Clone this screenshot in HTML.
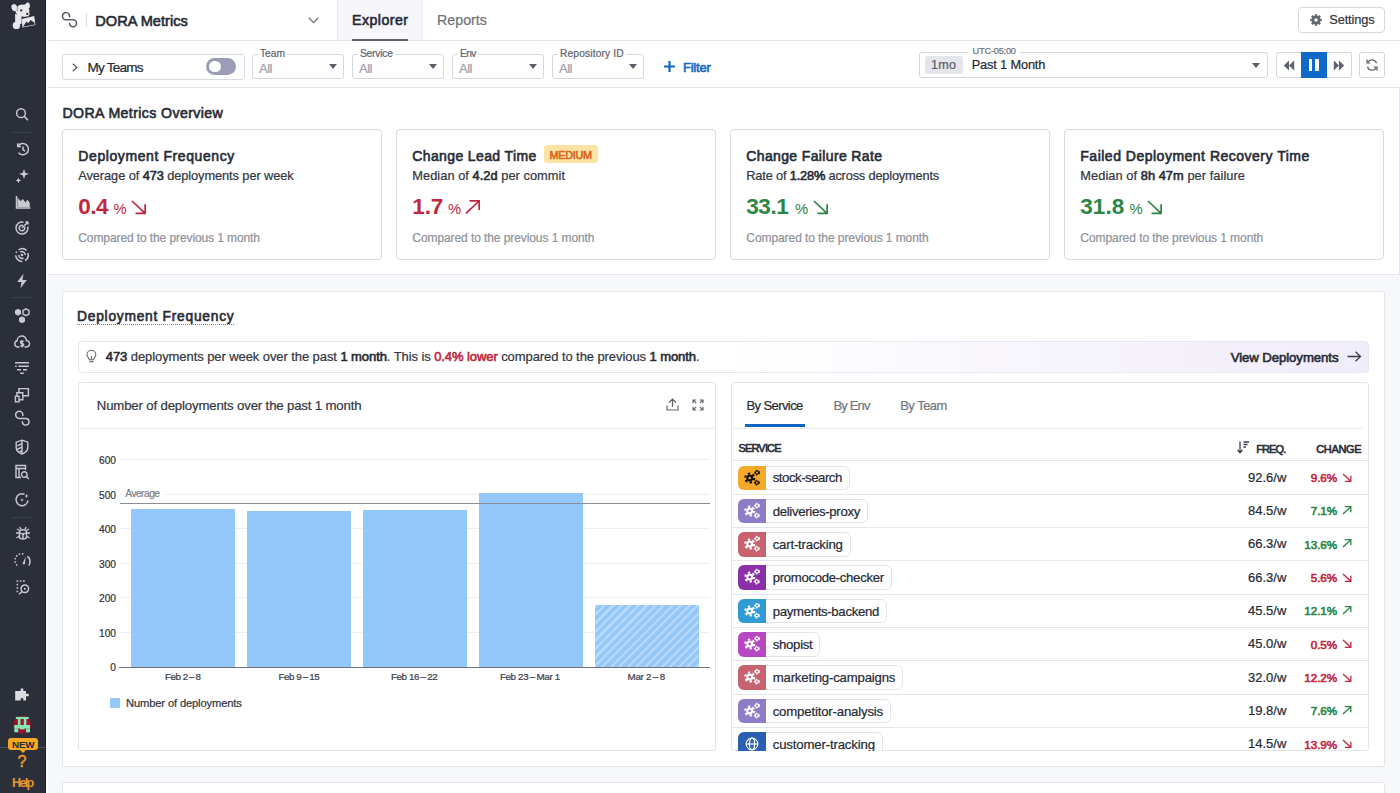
<!DOCTYPE html>
<html><head><meta charset="utf-8"><style>
*{box-sizing:border-box;margin:0;padding:0}
html,body{width:1400px;height:793px;overflow:hidden;background:#f7f8fa;font-family:"Liberation Sans",sans-serif;color:#2c303a;position:relative}
.a{position:absolute}
.t{position:absolute;white-space:nowrap;line-height:1}
svg.a{overflow:visible}
.n{-webkit-text-stroke:0.22px currentColor}
.sb{-webkit-text-stroke:0.6px currentColor}

</style></head><body>
<div class="a" style="left:0.00px;top:0.00px;width:46.00px;height:793.00px;background:#2b2f3a"></div>
<div class="a" style="left:45.00px;top:0.00px;width:1.00px;height:793.00px;background:#1d2029"></div>
<div class="a" style="left:46.00px;top:0.00px;width:1354.00px;height:40.00px;background:#fff"></div>
<div class="a" style="left:46.00px;top:40.00px;width:1354.00px;height:1.00px;background:#e3e4ea"></div>
<div class="a" style="left:46.00px;top:41.00px;width:1354.00px;height:46.00px;background:#fff"></div>
<div class="a" style="left:46.00px;top:87.00px;width:1354.00px;height:1.00px;background:#e3e4ea"></div>
<div class="a" style="left:46.00px;top:88.00px;width:1354.00px;height:187.00px;background:#fff"></div>
<div class="a" style="left:46.00px;top:274.00px;width:1354.00px;height:1.00px;background:#e6e7ec"></div>
<div class="a" style="left:1399.00px;top:88.00px;width:1.00px;height:187.00px;background:#e6e7ec"></div>
<div class="a" style="left:46.00px;top:0.00px;width:2.00px;height:793.00px;background:#fdfdfe"></div>
<svg class="a" style="left:60.00px;top:10.00px;" width="18" height="18" viewBox="0 0 18 18"><path d="M9.6 6.8A3.6 3.6 0 1 0 6 9.8H13A3.5 3.5 0 1 1 9.5 13.3" fill="none" stroke="#585c66" stroke-width="1.5" stroke-linecap="round"/></svg>
<div class="a" style="left:85.50px;top:13.00px;width:1.00px;height:14.00px;background:#dcdde3"></div>
<div class="t sb" style="left:95.30px;top:13.94px;font-size:14.60px;font-weight:normal;color:#272b35;">DORA Metrics</div>
<svg class="a" style="left:308.00px;top:17.00px;" width="11" height="7" viewBox="0 0 11 7"><path d="M0.8 0.8L5.5 5.6L10.2 0.8" fill="none" stroke="#6b6f7a" stroke-width="1.3"/></svg>
<div class="a" style="left:337.00px;top:0.00px;width:85.00px;height:40.00px;background:#f6f6fb"></div>
<div class="a" style="left:337.00px;top:0.00px;width:1.00px;height:40.00px;background:#e8e9ee"></div>
<div class="a" style="left:422.00px;top:0.00px;width:1.00px;height:40.00px;background:#eeeff3"></div>
<div class="t sb" style="left:352.00px;top:13.28px;font-size:14.20px;font-weight:normal;color:#272b35;letter-spacing:0.446px;">Explorer</div>
<div class="a" style="left:352.00px;top:39.00px;width:56.00px;height:2.00px;background:#5d6270"></div>
<div class="t n" style="left:437.00px;top:13.28px;font-size:14.20px;font-weight:normal;color:#6e727c;letter-spacing:0.046px;">Reports</div>
<div class="a" style="left:1298.00px;top:7.00px;width:87.00px;height:26.00px;border:1px solid #d6d8e0;border-radius:4px;background:#fff"></div>
<svg class="a" style="left:1310.00px;top:14.00px;" width="12" height="12" viewBox="0 0 12 12"><g fill="#62666f"><circle cx="6" cy="6" r="4.2"/><g stroke="#62666f" stroke-width="2.4"><path d="M6 0.3V11.7M0.3 6H11.7M1.9 1.9L10.1 10.1M10.1 1.9L1.9 10.1"/></g><circle cx="6" cy="6" r="1.7" fill="#fff"/></g></svg>
<div class="t n" style="left:1329.30px;top:14.36px;font-size:12.80px;font-weight:normal;color:#33373f;letter-spacing:-0.136px;">Settings</div>
<div class="a" style="left:61.50px;top:54.00px;width:183.00px;height:25.50px;border:1px solid #d9dbe3;border-radius:3px;background:#fff"></div>
<svg class="a" style="left:72.00px;top:63.00px;" width="6" height="9" viewBox="0 0 6 9"><path d="M0.8 0.8L4.8 4.5L0.8 8.2" fill="none" stroke="#555a66" stroke-width="1.2"/></svg>
<div class="t n" style="left:87.40px;top:60.89px;font-size:13.60px;font-weight:normal;color:#272b35;letter-spacing:-0.803px;">My Teams</div>
<div class="a" style="left:206.30px;top:58.30px;width:30.00px;height:16.70px;background:#9b9db7;border-radius:9px"></div>
<div class="a" style="left:209px;top:60.8px;width:11.7px;height:11.7px;border-radius:50%;background:#fff"></div>
<div class="a" style="left:252.00px;top:54.20px;width:92.00px;height:24.60px;border:1px solid #d6d8e0;border-radius:3px;background:#fff"></div>
<div class="a" style="left:258.00px;top:50.00px;width:29.00px;height:6.00px;background:#fff"></div>
<div class="t n" style="left:260.00px;top:48.97px;font-size:10.20px;font-weight:normal;color:#5f636d;letter-spacing:0.019px;">Team</div>
<div class="t n" style="left:259.00px;top:62.00px;font-size:13.00px;font-weight:normal;color:#9da0a8;letter-spacing:-0.474px;">All</div>
<div class="a" style="left:328.8px;top:64.3px;width:0;height:0;border-left:4.7px solid transparent;border-right:4.7px solid transparent;border-top:5.3px solid #5b5f6b"></div>
<div class="a" style="left:352.00px;top:54.20px;width:92.00px;height:24.60px;border:1px solid #d6d8e0;border-radius:3px;background:#fff"></div>
<div class="a" style="left:358.00px;top:50.00px;width:36.90px;height:6.00px;background:#fff"></div>
<div class="t n" style="left:360.00px;top:48.97px;font-size:10.20px;font-weight:normal;color:#5f636d;letter-spacing:-0.185px;">Service</div>
<div class="t n" style="left:359.00px;top:62.00px;font-size:13.00px;font-weight:normal;color:#9da0a8;letter-spacing:-0.474px;">All</div>
<div class="a" style="left:428.8px;top:64.3px;width:0;height:0;border-left:4.7px solid transparent;border-right:4.7px solid transparent;border-top:5.3px solid #5b5f6b"></div>
<div class="a" style="left:452.00px;top:54.20px;width:92.00px;height:24.60px;border:1px solid #d6d8e0;border-radius:3px;background:#fff"></div>
<div class="a" style="left:458.00px;top:50.00px;width:20.30px;height:6.00px;background:#fff"></div>
<div class="t n" style="left:460.00px;top:48.97px;font-size:10.20px;font-weight:normal;color:#5f636d;letter-spacing:-0.638px;">Env</div>
<div class="t n" style="left:459.00px;top:62.00px;font-size:13.00px;font-weight:normal;color:#9da0a8;letter-spacing:-0.474px;">All</div>
<div class="a" style="left:528.8px;top:64.3px;width:0;height:0;border-left:4.7px solid transparent;border-right:4.7px solid transparent;border-top:5.3px solid #5b5f6b"></div>
<div class="a" style="left:552.00px;top:54.20px;width:92.00px;height:24.60px;border:1px solid #d6d8e0;border-radius:3px;background:#fff"></div>
<div class="a" style="left:558.00px;top:50.00px;width:67.70px;height:6.00px;background:#fff"></div>
<div class="t n" style="left:560.00px;top:48.97px;font-size:10.20px;font-weight:normal;color:#5f636d;letter-spacing:0.159px;">Repository ID</div>
<div class="t n" style="left:559.00px;top:62.00px;font-size:13.00px;font-weight:normal;color:#9da0a8;letter-spacing:-0.474px;">All</div>
<div class="a" style="left:628.8px;top:64.3px;width:0;height:0;border-left:4.7px solid transparent;border-right:4.7px solid transparent;border-top:5.3px solid #5b5f6b"></div>
<svg class="a" style="left:663.00px;top:60.00px;" width="13" height="13" viewBox="0 0 13 13"><path d="M6.5 1V12M1 6.5H12" stroke="#1568c4" stroke-width="2.2"/></svg>
<div class="t sb" style="left:682.90px;top:61.00px;font-size:13.00px;font-weight:normal;color:#1568c4;letter-spacing:-0.178px;">Filter</div>
<div class="a" style="left:919.30px;top:52.00px;width:349.00px;height:25.80px;border:1px solid #d3d5de;border-radius:3px;background:#fff"></div>
<div class="a" style="left:968.00px;top:46.00px;width:52.00px;height:8.00px;background:#fff"></div>
<div class="t n" style="left:972.60px;top:47.11px;font-size:9.20px;font-weight:normal;color:#6c707a;letter-spacing:-0.199px;">UTC-05:00</div>
<div class="a" style="left:924.70px;top:55.70px;width:38.00px;height:18.20px;background:#e4e6ec;border-radius:3px"></div>
<div class="t n" style="left:931.00px;top:59.23px;font-size:12.60px;font-weight:normal;color:#5a5e69;letter-spacing:0.244px;">1mo</div>
<div class="t n" style="left:971.70px;top:59.06px;font-size:12.80px;font-weight:normal;color:#272b35;letter-spacing:-0.156px;">Past 1 Month</div>
<div class="a" style="left:1252px;top:62.9px;width:0;height:0;border-left:4.6px solid transparent;border-right:4.6px solid transparent;border-top:5px solid #5b5f6b"></div>
<div class="a" style="left:1276.00px;top:52.00px;width:75.50px;height:25.70px;border:1px solid #d3d5de;border-radius:3px;background:#fff"></div>
<div class="a" style="left:1301.00px;top:52.00px;width:25.70px;height:25.70px;background:#0f69c9"></div>
<svg class="a" style="left:1283.00px;top:60.00px;" width="12" height="11" viewBox="0 0 12 11"><path d="M6 0.5L0.8 5.5L6 10.5ZM11.2 0.5L6 5.5L11.2 10.5Z" fill="#5f636d"/></svg>
<svg class="a" style="left:1333.00px;top:60.00px;" width="12" height="11" viewBox="0 0 12 11"><path d="M0.8 0.5L6 5.5L0.8 10.5ZM6 0.5L11.2 5.5L6 10.5Z" fill="#5f636d"/></svg>
<div class="a" style="left:1308.50px;top:58.50px;width:3.60px;height:12.50px;background:#fff;border-radius:0.5px"></div>
<div class="a" style="left:1315.00px;top:58.50px;width:3.60px;height:12.50px;background:#fff;border-radius:0.5px"></div>
<div class="a" style="left:1359.30px;top:52.00px;width:25.40px;height:25.70px;border:1px solid #d3d5de;border-radius:3px;background:#fff"></div>
<svg class="a" style="left:1365.00px;top:58.00px;" width="14" height="14" viewBox="0 0 14 14"><path d="M11.6 5.2A5 5 0 0 0 2.6 4.2M2.4 8.8A5 5 0 0 0 11.4 9.8" fill="none" stroke="#62666f" stroke-width="1.3"/><path d="M2 1.6V4.8H5.2M12 12.4V9.2H8.8" fill="none" stroke="#62666f" stroke-width="1.3"/></svg>
<div class="t sb" style="left:62.40px;top:105.98px;font-size:14.20px;font-weight:normal;color:#272b35;letter-spacing:0.372px;">DORA Metrics Overview</div>
<div class="a" style="left:62.00px;top:129.00px;width:320.00px;height:131.00px;border:1px solid #d8d9e1;border-radius:4px;background:#fff"></div>
<div class="t sb" style="left:78.30px;top:148.85px;font-size:14.00px;font-weight:normal;color:#272b35;letter-spacing:0.593px;">Deployment Frequency</div>
<div class="t" style="left:78.30px;top:170.36px;font-size:12.80px;letter-spacing:-0.081px;"><span class="n" style="color:#33373f">Average of </span><span class="sb" style="color:#272b35">473</span><span class="n" style="color:#33373f"> deployments per week</span></div>
<div class="t" style="left:78.30px;top:196.25px;font-size:22.50px;font-weight:bold;color:#c1273e;letter-spacing:-0.489px;">0.4</div>
<div class="t" style="left:113.60px;top:202.27px;font-size:14.80px;font-weight:normal;color:#c1273e;">%</div>
<svg class="a" style="left:131.00px;top:200.00px;" width="15" height="14.3" viewBox="0 0 15 14.3"><path d="M1 1L13.5 12.8 M14.15 4.29V13.45H4.5" fill="none" stroke="#c1273e" stroke-width="1.7"/></svg>
<div class="t n" style="left:78.30px;top:231.64px;font-size:12.00px;font-weight:normal;color:#8f929b;letter-spacing:-0.099px;">Compared to the previous 1 month</div>
<div class="a" style="left:396.00px;top:129.00px;width:320.00px;height:131.00px;border:1px solid #d8d9e1;border-radius:4px;background:#fff"></div>
<div class="t sb" style="left:412.30px;top:148.85px;font-size:14.00px;font-weight:normal;color:#272b35;letter-spacing:0.376px;">Change Lead Time</div>
<div class="t" style="left:412.30px;top:170.36px;font-size:12.80px;letter-spacing:0.048px;"><span class="n" style="color:#33373f">Median of </span><span class="sb" style="color:#272b35">4.2d</span><span class="n" style="color:#33373f"> per commit</span></div>
<div class="t" style="left:412.30px;top:196.25px;font-size:22.50px;font-weight:bold;color:#c1273e;letter-spacing:-0.164px;">1.7</div>
<div class="t" style="left:448.00px;top:202.27px;font-size:14.80px;font-weight:normal;color:#c1273e;">%</div>
<svg class="a" style="left:465.00px;top:200.30px;" width="15" height="14.3" viewBox="0 0 15 14.3"><path d="M1 13.3L13.5 1.5 M4.5 0.85H14.15V10.01" fill="none" stroke="#c1273e" stroke-width="1.7"/></svg>
<div class="t n" style="left:412.30px;top:231.64px;font-size:12.00px;font-weight:normal;color:#8f929b;letter-spacing:-0.083px;">Compared to the previous 1 month</div>
<div class="a" style="left:730.00px;top:129.00px;width:320.00px;height:131.00px;border:1px solid #d8d9e1;border-radius:4px;background:#fff"></div>
<div class="t sb" style="left:746.30px;top:148.85px;font-size:14.00px;font-weight:normal;color:#272b35;letter-spacing:0.362px;">Change Failure Rate</div>
<div class="t" style="left:746.30px;top:170.36px;font-size:12.80px;letter-spacing:-0.179px;"><span class="n" style="color:#33373f">Rate of </span><span class="sb" style="color:#272b35">1.28%</span><span class="n" style="color:#33373f"> across deployments</span></div>
<div class="t" style="left:746.30px;top:196.25px;font-size:22.50px;font-weight:bold;color:#2b8646;letter-spacing:-0.447px;">33.1</div>
<div class="t" style="left:795.00px;top:202.27px;font-size:14.80px;font-weight:normal;color:#2b8646;">%</div>
<svg class="a" style="left:813.00px;top:200.00px;" width="15" height="14.3" viewBox="0 0 15 14.3"><path d="M1 1L13.5 12.8 M14.15 4.29V13.45H4.5" fill="none" stroke="#2b8646" stroke-width="1.7"/></svg>
<div class="t n" style="left:746.30px;top:231.64px;font-size:12.00px;font-weight:normal;color:#8f929b;letter-spacing:-0.075px;">Compared to the previous 1 month</div>
<div class="a" style="left:1064.00px;top:129.00px;width:320.00px;height:131.00px;border:1px solid #d8d9e1;border-radius:4px;background:#fff"></div>
<div class="t sb" style="left:1080.30px;top:148.85px;font-size:14.00px;font-weight:normal;color:#272b35;letter-spacing:0.499px;">Failed Deployment Recovery Time</div>
<div class="t" style="left:1080.30px;top:170.36px;font-size:12.80px;letter-spacing:0.065px;"><span class="n" style="color:#33373f">Median of </span><span class="sb" style="color:#272b35">8h 47m</span><span class="n" style="color:#33373f"> per failure</span></div>
<div class="t" style="left:1080.30px;top:196.25px;font-size:22.50px;font-weight:bold;color:#2b8646;letter-spacing:0.053px;">31.8</div>
<div class="t" style="left:1129.50px;top:202.27px;font-size:14.80px;font-weight:normal;color:#2b8646;">%</div>
<svg class="a" style="left:1147.00px;top:200.00px;" width="15" height="14.3" viewBox="0 0 15 14.3"><path d="M1 1L13.5 12.8 M14.15 4.29V13.45H4.5" fill="none" stroke="#2b8646" stroke-width="1.7"/></svg>
<div class="t n" style="left:1080.30px;top:231.64px;font-size:12.00px;font-weight:normal;color:#8f929b;letter-spacing:-0.059px;">Compared to the previous 1 month</div>
<div class="a" style="left:543.75px;top:145.00px;width:53.75px;height:18.00px;background:#fde4a5;border-radius:3px"></div>
<div class="t sb" style="left:549.50px;top:150.21px;font-size:10.80px;font-weight:normal;color:#d9661b;letter-spacing:-0.259px;">MEDIUM</div>
<div class="a" style="left:61.60px;top:290.50px;width:1323.00px;height:476.00px;border:1px solid #e4e5ea;border-radius:2px;background:#fff"></div>
<div class="a" style="left:61.60px;top:782.00px;width:1323.00px;height:40.00px;border:1px solid #e4e5ea;border-radius:2px;background:#fff"></div>
<div class="t sb" style="left:77.10px;top:309.92px;font-size:13.80px;font-weight:normal;color:#272b35;letter-spacing:0.733px;">Deployment Frequency</div>
<div class="a" style="left:77.10px;top:324.00px;width:157.00px;height:1.00px;background-image:linear-gradient(90deg,#7d818c 50%,transparent 50%);background-size:2px 1px"></div>
<div class="a" style="left:77.60px;top:340.50px;width:1291.00px;height:32.30px;border:1px solid #e6e7ee;border-radius:4px;background:linear-gradient(90deg,#fff 0%,#fff 50%,#f1ecfa 100%)"></div>
<svg class="a" style="left:85.00px;top:350.00px;" width="13" height="14" viewBox="0 0 13 14"><path d="M4.2 9.8C4.2 8 2 6.9 2 4.7A4.4 4.4 0 0 1 10.8 4.7C10.8 6.9 8.6 8 8.6 9.8Z" fill="none" stroke="#6a6e78" stroke-width="1.1"/><path d="M4.3 11.6H8.5M6.4 9.8V6.2" fill="none" stroke="#6a6e78" stroke-width="1.1"/></svg>
<div class="t" style="left:105.80px;top:350.40px;font-size:13.00px;letter-spacing:-0.081px;"><span class="sb" style="color:#272b35">473</span><span class="n" style="color:#33373f"> deployments per week over the past </span><span class="sb" style="color:#272b35">1 month</span><span class="n" style="color:#33373f">. This is </span><span class="sb" style="color:#c1273e">0.4% lower</span><span class="n" style="color:#33373f"> compared to the previous </span><span class="sb" style="color:#272b35">1 month</span><span class="n" style="color:#33373f">.</span></div>
<div class="t sb" style="left:1230.70px;top:350.53px;font-size:13.20px;font-weight:normal;color:#272b35;letter-spacing:-0.078px;">View Deployments</div>
<svg class="a" style="left:1346.50px;top:351.00px;" width="14.5" height="11" viewBox="0 0 14.5 11"><path d="M0.5 5.5H13.5M8.5 0.8L13.5 5.5L8.5 10.2" fill="none" stroke="#3b3f49" stroke-width="1.3"/></svg>
<div class="a" style="left:77.60px;top:381.50px;width:638.00px;height:369.00px;border:1px solid #e4e5ea;border-radius:3px;background:#fff"></div>
<div class="a" style="left:78.60px;top:428.00px;width:636.00px;height:1.00px;background:#e9eaee"></div>
<div class="t n" style="left:96.80px;top:399.13px;font-size:13.20px;font-weight:normal;color:#33373f;letter-spacing:-0.154px;">Number of deployments over the past 1 month</div>
<svg class="a" style="left:666.00px;top:398.00px;" width="13" height="13" viewBox="0 0 13 13"><path d="M6.5 9V1.2M3 4.5L6.5 1L10 4.5M1 7.5V12H12V7.5" fill="none" stroke="#62666f" stroke-width="1.2"/></svg>
<svg class="a" style="left:692.00px;top:399.00px;" width="12" height="12" viewBox="0 0 12 12"><path d="M1 4.3V1H4.3M1 1L4.2 4.2M7.7 1H11V4.3M11 1L7.8 4.2M1 7.7V11H4.3M1 11L4.2 7.8M11 7.7V11H7.7M11 11L7.8 7.8" fill="none" stroke="#62666f" stroke-width="1.1"/></svg>
<div class="t n" style="left:110.33px;top:663.27px;font-size:10.20px;font-weight:normal;color:#30343e;">0</div>
<div class="a" style="left:120.40px;top:631.95px;width:590.00px;height:1.00px;background:#eeeff2"></div>
<div class="t n" style="left:98.98px;top:628.72px;font-size:10.20px;font-weight:normal;color:#30343e;">100</div>
<div class="a" style="left:120.40px;top:597.40px;width:590.00px;height:1.00px;background:#eeeff2"></div>
<div class="t n" style="left:98.98px;top:594.17px;font-size:10.20px;font-weight:normal;color:#30343e;">200</div>
<div class="a" style="left:120.40px;top:562.85px;width:590.00px;height:1.00px;background:#eeeff2"></div>
<div class="t n" style="left:98.98px;top:559.62px;font-size:10.20px;font-weight:normal;color:#30343e;">300</div>
<div class="a" style="left:120.40px;top:528.30px;width:590.00px;height:1.00px;background:#eeeff2"></div>
<div class="t n" style="left:98.98px;top:525.07px;font-size:10.20px;font-weight:normal;color:#30343e;">400</div>
<div class="a" style="left:120.40px;top:493.75px;width:590.00px;height:1.00px;background:#eeeff2"></div>
<div class="t n" style="left:98.98px;top:490.52px;font-size:10.20px;font-weight:normal;color:#30343e;">500</div>
<div class="a" style="left:120.40px;top:459.20px;width:590.00px;height:1.00px;background:#eeeff2"></div>
<div class="t n" style="left:98.98px;top:455.97px;font-size:10.20px;font-weight:normal;color:#30343e;">600</div>
<div class="a" style="left:131.00px;top:508.76px;width:104.00px;height:158.24px;background:#94c8fa"></div>
<div class="a" style="left:247.00px;top:510.83px;width:104.00px;height:156.17px;background:#94c8fa"></div>
<div class="a" style="left:363.00px;top:509.80px;width:104.00px;height:157.20px;background:#94c8fa"></div>
<div class="a" style="left:479.00px;top:492.52px;width:104.00px;height:174.48px;background:#94c8fa"></div>
<div class="a" style="left:595.00px;top:604.81px;width:104.00px;height:62.19px;background:repeating-linear-gradient(135deg,#b6d9fc 0px,#b6d9fc 2.2px,#94c8fa 2.2px,#94c8fa 6px)"></div>
<div class="a" style="left:120.40px;top:503.00px;width:590.00px;height:1.00px;background:#8b8e97"></div>
<div class="a" style="left:122.00px;top:489.00px;width:42.00px;height:10.00px;background:#fff"></div>
<div class="t n" style="left:125.30px;top:489.37px;font-size:10.20px;font-weight:normal;color:#7b7f89;letter-spacing:-0.518px;">Average</div>
<div class="a" style="left:119.40px;top:666.50px;width:591.00px;height:1.50px;background:#6f737d"></div>
<div class="t n" style="left:165.00px;top:671.80px;font-size:9.80px;font-weight:normal;color:#3d414b;letter-spacing:-0.486px;">Feb 2 – 8</div>
<div class="t n" style="left:278.50px;top:671.80px;font-size:9.80px;font-weight:normal;color:#3d414b;letter-spacing:-0.448px;">Feb 9 – 15</div>
<div class="t n" style="left:391.00px;top:671.80px;font-size:9.80px;font-weight:normal;color:#3d414b;letter-spacing:-0.409px;">Feb 16 – 22</div>
<div class="t n" style="left:499.90px;top:671.80px;font-size:9.80px;font-weight:normal;color:#3d414b;letter-spacing:-0.357px;">Feb 23 – Mar 1</div>
<div class="t n" style="left:627.50px;top:671.80px;font-size:9.80px;font-weight:normal;color:#3d414b;letter-spacing:-0.272px;">Mar 2 – 8</div>
<div class="a" style="left:110.30px;top:698.00px;width:10.00px;height:10.00px;background:#94c8fa;border-radius:1px"></div>
<div class="t n" style="left:126.00px;top:698.12px;font-size:11.20px;font-weight:normal;color:#33373f;letter-spacing:-0.145px;">Number of deployments</div>
<div class="a" style="left:731.00px;top:381.50px;width:638.00px;height:369.50px;border:1px solid #e4e5ea;border-radius:3px;background:#fff"></div>
<div class="t n" style="left:746.40px;top:398.70px;font-size:13.00px;font-weight:normal;color:#272b35;letter-spacing:-0.581px;">By Service</div>
<div class="t n" style="left:833.50px;top:398.70px;font-size:13.00px;font-weight:normal;color:#727680;letter-spacing:-0.857px;">By Env</div>
<div class="t n" style="left:900.20px;top:398.70px;font-size:13.00px;font-weight:normal;color:#727680;letter-spacing:-0.523px;">By Team</div>
<div class="a" style="left:732.50px;top:428.00px;width:629.00px;height:1.20px;background:#e8e9ed"></div>
<div class="a" style="left:745.20px;top:423.70px;width:59.50px;height:3.80px;background:#1165c2"></div>
<div class="t sb" style="left:738.40px;top:443.29px;font-size:11.00px;font-weight:normal;color:#272b35;letter-spacing:-0.816px;">SERVICE</div>
<div class="t sb" style="left:1256.20px;top:443.59px;font-size:11.00px;font-weight:normal;color:#272b35;letter-spacing:-0.878px;">FREQ.</div>
<div class="t sb" style="left:1316.20px;top:443.59px;font-size:11.00px;font-weight:normal;color:#272b35;letter-spacing:-0.332px;">CHANGE</div>
<svg class="a" style="left:1237.00px;top:440.50px;" width="13" height="13" viewBox="0 0 13 13"><path d="M3 0.5V11.5M0.5 9L3 11.8L5.5 9M6.5 1H12M6.5 3.5H10.5M6.5 6H9" fill="none" stroke="#3b3f49" stroke-width="1.3"/></svg>
<div class="a" style="left:732.50px;top:460.00px;width:636.00px;height:1.00px;background:#e6e7eb"></div>
<div class="a" style="left:732.5px;top:461px;width:636px;height:289.5px;overflow:hidden">
<div class="a" style="left:5.90px;top:4.50px;width:111.60px;height:24.5px;border:1px solid #e3e4ea;border-radius:6px;background:#fff"></div>
<div class="a" style="left:5.90px;top:4.50px;width:27.6px;height:24.5px;border-radius:6px 0 0 6px;background:#f6a82b"></div>
<svg class="a" style="left:11.80px;top:8.50px" width="16" height="16" viewBox="0 0 16 16"><circle cx="5.7" cy="8" r="3.5" fill="#111"/><circle cx="5.7" cy="8" r="4.5" fill="none" stroke="#111" stroke-width="2.1" stroke-dasharray="2.3 2.41"/><circle cx="5.7" cy="8" r="1.3" fill="#f6a82b"/><g fill="none" stroke="#111"><circle cx="13" cy="2.6" r="1.6" stroke-width="1.2"/><circle cx="13" cy="2.6" r="2.4" stroke-width="1.1" stroke-dasharray="1.5 1.52"/><circle cx="12.8" cy="12.6" r="1.6" stroke-width="1.2"/><circle cx="12.8" cy="12.6" r="2.4" stroke-width="1.1" stroke-dasharray="1.5 1.52"/></g></svg>
<div style="position:absolute;left:0;top:0">
<div class="t n" style="left:40.20px;top:10.43px;font-size:13.20px;font-weight:normal;color:#272b35;letter-spacing:-0.466px;">stock-search</div>
<div class="t n" style="left:515.50px;top:9.80px;font-size:13.00px;font-weight:normal;color:#272b35;">92.6/w</div>
<div class="t sb" style="left:578.13px;top:10.90px;font-size:11.70px;font-weight:normal;color:#c1273e;">9.6%</div>
<svg class="a" style="left:609.00px;top:11.80px;" width="9.5" height="9" viewBox="0 0 9.5 9"><path d="M1 1L8 7.5 M8.85 2.7V8.35H2.85" fill="none" stroke="#c1273e" stroke-width="1.3"/></svg>
</div>
<div class="a" style="left:0;top:32.83px;width:636px;height:1px;background:#e6e7eb"></div>
<div class="a" style="left:5.90px;top:37.83px;width:129.60px;height:24.5px;border:1px solid #e3e4ea;border-radius:6px;background:#fff"></div>
<div class="a" style="left:5.90px;top:37.83px;width:27.6px;height:24.5px;border-radius:6px 0 0 6px;background:#8e7dc6"></div>
<svg class="a" style="left:11.80px;top:41.83px" width="16" height="16" viewBox="0 0 16 16"><circle cx="5.7" cy="8" r="3.5" fill="#fff"/><circle cx="5.7" cy="8" r="4.5" fill="none" stroke="#fff" stroke-width="2.1" stroke-dasharray="2.3 2.41"/><circle cx="5.7" cy="8" r="1.3" fill="#8e7dc6"/><g fill="none" stroke="#fff"><circle cx="13" cy="2.6" r="1.6" stroke-width="1.2"/><circle cx="13" cy="2.6" r="2.4" stroke-width="1.1" stroke-dasharray="1.5 1.52"/><circle cx="12.8" cy="12.6" r="1.6" stroke-width="1.2"/><circle cx="12.8" cy="12.6" r="2.4" stroke-width="1.1" stroke-dasharray="1.5 1.52"/></g></svg>
<div style="position:absolute;left:0;top:0">
<div class="t n" style="left:40.20px;top:43.76px;font-size:13.20px;font-weight:normal;color:#272b35;letter-spacing:-0.316px;">deliveries-proxy</div>
<div class="t n" style="left:515.50px;top:43.13px;font-size:13.00px;font-weight:normal;color:#272b35;">84.5/w</div>
<div class="t sb" style="left:578.13px;top:44.23px;font-size:11.70px;font-weight:normal;color:#2b8646;">7.1%</div>
<svg class="a" style="left:609.00px;top:45.13px;" width="9.5" height="9" viewBox="0 0 9.5 9"><path d="M1 8L8 1.5 M2.85 0.65H8.85V6.3" fill="none" stroke="#2b8646" stroke-width="1.3"/></svg>
</div>
<div class="a" style="left:0;top:66.16px;width:636px;height:1px;background:#e6e7eb"></div>
<div class="a" style="left:5.90px;top:71.16px;width:112.20px;height:24.5px;border:1px solid #e3e4ea;border-radius:6px;background:#fff"></div>
<div class="a" style="left:5.90px;top:71.16px;width:27.6px;height:24.5px;border-radius:6px 0 0 6px;background:#c9626f"></div>
<svg class="a" style="left:11.80px;top:75.16px" width="16" height="16" viewBox="0 0 16 16"><circle cx="5.7" cy="8" r="3.5" fill="#fff"/><circle cx="5.7" cy="8" r="4.5" fill="none" stroke="#fff" stroke-width="2.1" stroke-dasharray="2.3 2.41"/><circle cx="5.7" cy="8" r="1.3" fill="#c9626f"/><g fill="none" stroke="#fff"><circle cx="13" cy="2.6" r="1.6" stroke-width="1.2"/><circle cx="13" cy="2.6" r="2.4" stroke-width="1.1" stroke-dasharray="1.5 1.52"/><circle cx="12.8" cy="12.6" r="1.6" stroke-width="1.2"/><circle cx="12.8" cy="12.6" r="2.4" stroke-width="1.1" stroke-dasharray="1.5 1.52"/></g></svg>
<div style="position:absolute;left:0;top:0">
<div class="t n" style="left:40.20px;top:77.09px;font-size:13.20px;font-weight:normal;color:#272b35;letter-spacing:-0.193px;">cart-tracking</div>
<div class="t n" style="left:515.50px;top:76.46px;font-size:13.00px;font-weight:normal;color:#272b35;">66.3/w</div>
<div class="t sb" style="left:571.63px;top:77.56px;font-size:11.70px;font-weight:normal;color:#2b8646;">13.6%</div>
<svg class="a" style="left:609.00px;top:78.46px;" width="9.5" height="9" viewBox="0 0 9.5 9"><path d="M1 8L8 1.5 M2.85 0.65H8.85V6.3" fill="none" stroke="#2b8646" stroke-width="1.3"/></svg>
</div>
<div class="a" style="left:0;top:99.49px;width:636px;height:1px;background:#e6e7eb"></div>
<div class="a" style="left:5.90px;top:104.49px;width:153.40px;height:24.5px;border:1px solid #e3e4ea;border-radius:6px;background:#fff"></div>
<div class="a" style="left:5.90px;top:104.49px;width:27.6px;height:24.5px;border-radius:6px 0 0 6px;background:#8b2fab"></div>
<svg class="a" style="left:11.80px;top:108.49px" width="16" height="16" viewBox="0 0 16 16"><circle cx="5.7" cy="8" r="3.5" fill="#fff"/><circle cx="5.7" cy="8" r="4.5" fill="none" stroke="#fff" stroke-width="2.1" stroke-dasharray="2.3 2.41"/><circle cx="5.7" cy="8" r="1.3" fill="#8b2fab"/><g fill="none" stroke="#fff"><circle cx="13" cy="2.6" r="1.6" stroke-width="1.2"/><circle cx="13" cy="2.6" r="2.4" stroke-width="1.1" stroke-dasharray="1.5 1.52"/><circle cx="12.8" cy="12.6" r="1.6" stroke-width="1.2"/><circle cx="12.8" cy="12.6" r="2.4" stroke-width="1.1" stroke-dasharray="1.5 1.52"/></g></svg>
<div style="position:absolute;left:0;top:0">
<div class="t n" style="left:40.20px;top:110.42px;font-size:13.20px;font-weight:normal;color:#272b35;letter-spacing:-0.322px;">promocode-checker</div>
<div class="t n" style="left:515.50px;top:109.79px;font-size:13.00px;font-weight:normal;color:#272b35;">66.3/w</div>
<div class="t sb" style="left:578.13px;top:110.89px;font-size:11.70px;font-weight:normal;color:#c1273e;">5.6%</div>
<svg class="a" style="left:609.00px;top:111.79px;" width="9.5" height="9" viewBox="0 0 9.5 9"><path d="M1 1L8 7.5 M8.85 2.7V8.35H2.85" fill="none" stroke="#c1273e" stroke-width="1.3"/></svg>
</div>
<div class="a" style="left:0;top:132.82px;width:636px;height:1px;background:#e6e7eb"></div>
<div class="a" style="left:5.90px;top:137.82px;width:148.60px;height:24.5px;border:1px solid #e3e4ea;border-radius:6px;background:#fff"></div>
<div class="a" style="left:5.90px;top:137.82px;width:27.6px;height:24.5px;border-radius:6px 0 0 6px;background:#2f9ad3"></div>
<svg class="a" style="left:11.80px;top:141.82px" width="16" height="16" viewBox="0 0 16 16"><circle cx="5.7" cy="8" r="3.5" fill="#fff"/><circle cx="5.7" cy="8" r="4.5" fill="none" stroke="#fff" stroke-width="2.1" stroke-dasharray="2.3 2.41"/><circle cx="5.7" cy="8" r="1.3" fill="#2f9ad3"/><g fill="none" stroke="#fff"><circle cx="13" cy="2.6" r="1.6" stroke-width="1.2"/><circle cx="13" cy="2.6" r="2.4" stroke-width="1.1" stroke-dasharray="1.5 1.52"/><circle cx="12.8" cy="12.6" r="1.6" stroke-width="1.2"/><circle cx="12.8" cy="12.6" r="2.4" stroke-width="1.1" stroke-dasharray="1.5 1.52"/></g></svg>
<div style="position:absolute;left:0;top:0">
<div class="t n" style="left:40.20px;top:143.75px;font-size:13.20px;font-weight:normal;color:#272b35;letter-spacing:-0.322px;">payments-backend</div>
<div class="t n" style="left:515.50px;top:143.12px;font-size:13.00px;font-weight:normal;color:#272b35;">45.5/w</div>
<div class="t sb" style="left:571.63px;top:144.22px;font-size:11.70px;font-weight:normal;color:#2b8646;">12.1%</div>
<svg class="a" style="left:609.00px;top:145.12px;" width="9.5" height="9" viewBox="0 0 9.5 9"><path d="M1 8L8 1.5 M2.85 0.65H8.85V6.3" fill="none" stroke="#2b8646" stroke-width="1.3"/></svg>
</div>
<div class="a" style="left:0;top:166.15px;width:636px;height:1px;background:#e6e7eb"></div>
<div class="a" style="left:5.90px;top:171.15px;width:82.00px;height:24.5px;border:1px solid #e3e4ea;border-radius:6px;background:#fff"></div>
<div class="a" style="left:5.90px;top:171.15px;width:27.6px;height:24.5px;border-radius:6px 0 0 6px;background:#b848c2"></div>
<svg class="a" style="left:11.80px;top:175.15px" width="16" height="16" viewBox="0 0 16 16"><circle cx="5.7" cy="8" r="3.5" fill="#fff"/><circle cx="5.7" cy="8" r="4.5" fill="none" stroke="#fff" stroke-width="2.1" stroke-dasharray="2.3 2.41"/><circle cx="5.7" cy="8" r="1.3" fill="#b848c2"/><g fill="none" stroke="#fff"><circle cx="13" cy="2.6" r="1.6" stroke-width="1.2"/><circle cx="13" cy="2.6" r="2.4" stroke-width="1.1" stroke-dasharray="1.5 1.52"/><circle cx="12.8" cy="12.6" r="1.6" stroke-width="1.2"/><circle cx="12.8" cy="12.6" r="2.4" stroke-width="1.1" stroke-dasharray="1.5 1.52"/></g></svg>
<div style="position:absolute;left:0;top:0">
<div class="t n" style="left:40.20px;top:177.08px;font-size:13.20px;font-weight:normal;color:#272b35;letter-spacing:-0.287px;">shopist</div>
<div class="t n" style="left:515.50px;top:176.45px;font-size:13.00px;font-weight:normal;color:#272b35;">45.0/w</div>
<div class="t sb" style="left:578.13px;top:177.55px;font-size:11.70px;font-weight:normal;color:#c1273e;">0.5%</div>
<svg class="a" style="left:609.00px;top:178.45px;" width="9.5" height="9" viewBox="0 0 9.5 9"><path d="M1 1L8 7.5 M8.85 2.7V8.35H2.85" fill="none" stroke="#c1273e" stroke-width="1.3"/></svg>
</div>
<div class="a" style="left:0;top:199.48px;width:636px;height:1px;background:#e6e7eb"></div>
<div class="a" style="left:5.90px;top:204.48px;width:164.80px;height:24.5px;border:1px solid #e3e4ea;border-radius:6px;background:#fff"></div>
<div class="a" style="left:5.90px;top:204.48px;width:27.6px;height:24.5px;border-radius:6px 0 0 6px;background:#c9626f"></div>
<svg class="a" style="left:11.80px;top:208.48px" width="16" height="16" viewBox="0 0 16 16"><circle cx="5.7" cy="8" r="3.5" fill="#fff"/><circle cx="5.7" cy="8" r="4.5" fill="none" stroke="#fff" stroke-width="2.1" stroke-dasharray="2.3 2.41"/><circle cx="5.7" cy="8" r="1.3" fill="#c9626f"/><g fill="none" stroke="#fff"><circle cx="13" cy="2.6" r="1.6" stroke-width="1.2"/><circle cx="13" cy="2.6" r="2.4" stroke-width="1.1" stroke-dasharray="1.5 1.52"/><circle cx="12.8" cy="12.6" r="1.6" stroke-width="1.2"/><circle cx="12.8" cy="12.6" r="2.4" stroke-width="1.1" stroke-dasharray="1.5 1.52"/></g></svg>
<div style="position:absolute;left:0;top:0">
<div class="t n" style="left:40.20px;top:210.41px;font-size:13.20px;font-weight:normal;color:#272b35;letter-spacing:-0.183px;">marketing-campaigns</div>
<div class="t n" style="left:515.50px;top:209.78px;font-size:13.00px;font-weight:normal;color:#272b35;">32.0/w</div>
<div class="t sb" style="left:571.63px;top:210.88px;font-size:11.70px;font-weight:normal;color:#c1273e;">12.2%</div>
<svg class="a" style="left:609.00px;top:211.78px;" width="9.5" height="9" viewBox="0 0 9.5 9"><path d="M1 1L8 7.5 M8.85 2.7V8.35H2.85" fill="none" stroke="#c1273e" stroke-width="1.3"/></svg>
</div>
<div class="a" style="left:0;top:232.81px;width:636px;height:1px;background:#e6e7eb"></div>
<div class="a" style="left:5.90px;top:237.81px;width:152.50px;height:24.5px;border:1px solid #e3e4ea;border-radius:6px;background:#fff"></div>
<div class="a" style="left:5.90px;top:237.81px;width:27.6px;height:24.5px;border-radius:6px 0 0 6px;background:#8e7dc6"></div>
<svg class="a" style="left:11.80px;top:241.81px" width="16" height="16" viewBox="0 0 16 16"><circle cx="5.7" cy="8" r="3.5" fill="#fff"/><circle cx="5.7" cy="8" r="4.5" fill="none" stroke="#fff" stroke-width="2.1" stroke-dasharray="2.3 2.41"/><circle cx="5.7" cy="8" r="1.3" fill="#8e7dc6"/><g fill="none" stroke="#fff"><circle cx="13" cy="2.6" r="1.6" stroke-width="1.2"/><circle cx="13" cy="2.6" r="2.4" stroke-width="1.1" stroke-dasharray="1.5 1.52"/><circle cx="12.8" cy="12.6" r="1.6" stroke-width="1.2"/><circle cx="12.8" cy="12.6" r="2.4" stroke-width="1.1" stroke-dasharray="1.5 1.52"/></g></svg>
<div style="position:absolute;left:0;top:0">
<div class="t n" style="left:40.20px;top:243.74px;font-size:13.20px;font-weight:normal;color:#272b35;letter-spacing:-0.173px;">competitor-analysis</div>
<div class="t n" style="left:515.50px;top:243.11px;font-size:13.00px;font-weight:normal;color:#272b35;">19.8/w</div>
<div class="t sb" style="left:578.13px;top:244.21px;font-size:11.70px;font-weight:normal;color:#2b8646;">7.6%</div>
<svg class="a" style="left:609.00px;top:245.11px;" width="9.5" height="9" viewBox="0 0 9.5 9"><path d="M1 8L8 1.5 M2.85 0.65H8.85V6.3" fill="none" stroke="#2b8646" stroke-width="1.3"/></svg>
</div>
<div class="a" style="left:0;top:266.14px;width:636px;height:1px;background:#e6e7eb"></div>
<div class="a" style="left:5.90px;top:271.14px;width:144.30px;height:24.5px;border:1px solid #e3e4ea;border-radius:6px;background:#fff"></div>
<div class="a" style="left:5.90px;top:271.14px;width:27.6px;height:24.5px;border-radius:6px 0 0 6px;background:#2b5fb3"></div>
<svg class="a" style="left:12.50px;top:276.14px" width="14" height="14" viewBox="0 0 14 14"><g fill="none" stroke="#fff" stroke-width="1.2"><circle cx="7" cy="7" r="5.8"/><ellipse cx="7" cy="7" rx="2.6" ry="5.8"/><path d="M1.2 7H12.8"/></g></svg>
<div style="position:absolute;left:0;top:0">
<div class="t n" style="left:40.20px;top:277.07px;font-size:13.20px;font-weight:normal;color:#272b35;letter-spacing:-0.156px;">customer-tracking</div>
<div class="t n" style="left:515.50px;top:276.44px;font-size:13.00px;font-weight:normal;color:#272b35;">14.5/w</div>
<div class="t sb" style="left:571.63px;top:277.54px;font-size:11.70px;font-weight:normal;color:#c1273e;">13.9%</div>
<svg class="a" style="left:609.00px;top:278.44px;" width="9.5" height="9" viewBox="0 0 9.5 9"><path d="M1 1L8 7.5 M8.85 2.7V8.35H2.85" fill="none" stroke="#c1273e" stroke-width="1.3"/></svg>
</div>
</div>
<svg class="a" style="left:0.00px;top:0.00px;" width="46" height="46" viewBox="0 0 46 46"><g fill="#e8e8ec"><ellipse cx="22.4" cy="10.4" rx="7" ry="6"/><ellipse cx="14.4" cy="7.6" rx="2.9" ry="3.6" transform="rotate(-20 14.4 7.6)"/><path d="M23.5 5.5L27.6 2.3C29.2 2.3 30.3 4.5 29.9 7.6L27.5 8.5Z"/><path d="M27 10L29.9 13.6L28.4 16.3L23 17Z"/><path d="M15 14L21.5 15.5L21.6 23.5L18 25.5L15.2 22Z"/><ellipse cx="16.4" cy="25.4" rx="3.7" ry="3.6"/><path d="M21.7 19L34.2 16.1L35.4 25L22.5 27.4Z"/></g><path d="M17.3 5.6Q17.8 8.5 17 11.2" fill="none" stroke="#2b2f3a" stroke-width="0.6" opacity="0.8"/><path d="M23.2 26.6L26.5 21.6L28.2 23.2L30.6 20L34.5 22.8L34.8 24.6L23.4 26.8Z" fill="#2b2f3a"/><circle cx="21.2" cy="10.4" r="1.1" fill="#2b2f3a"/><circle cx="27.3" cy="13.9" r="1.1" fill="#2b2f3a"/></svg>
<svg class="a" style="left:13.00px;top:105.00px;" width="18" height="18" viewBox="-9 -9 18 18"><g fill="none" stroke="#c8cad2" stroke-width="1.5"><circle cx="-1" cy="-0.8" r="4.4"/><path d="M2.2 2.4L6 6.2"/></g></svg>
<div class="a" style="left:11.50px;top:131.60px;width:20.50px;height:1.00px;background:#3c404d"></div>
<svg class="a" style="left:13.50px;top:140.40px;" width="18" height="18" viewBox="-9 -9 18 18"><g fill="none" stroke="#c8cad2" stroke-width="1.5"><path d="M-4.8 -3A5.6 5.6 0 1 1 -4.6 3.6"/><path d="M0 -2.5V0.6L2 2.2"/><path d="M-5.3 -5.8V-2.5H-2"/></g></svg>
<svg class="a" style="left:13.00px;top:166.50px;" width="18" height="18" viewBox="-9 -9 18 18"><g fill="#c8cad2"><path d="M2 -7L3.3 -3.3L7 -2L3.3 -0.7L2 3L0.7 -0.7L-3 -2L0.7 -3.3Z"/><path d="M-3.6 1.5L-2.8 3.6L-0.7 4.4L-2.8 5.2L-3.6 7.3L-4.4 5.2L-6.5 4.4L-4.4 3.6Z"/></g></svg>
<svg class="a" style="left:13.50px;top:192.80px;" width="18" height="18" viewBox="-9 -9 18 18"><path d="M-6.5 -6V6H7.5" fill="none" stroke="#c8cad2" stroke-width="1.5"/><path d="M-5.5 5V-4.5L-2.5 -1L0 -3L2.5 0.5L4.5 -2.5L6.8 1V5Z" fill="#c8cad2"/></svg>
<svg class="a" style="left:13.20px;top:219.30px;" width="18" height="18" viewBox="-9 -9 18 18"><g fill="none" stroke="#c8cad2" stroke-width="1.5"><path d="M5.8 -1.5A6 6 0 1 1 1.5 -5.8"/><path d="M2.6 -1A2.8 2.8 0 1 1 1 -2.6"/><path d="M0 0L5.5 -5.5M3.5 -6.2L5.8 -5.8L6.2 -3.5"/></g></svg>
<svg class="a" style="left:13.20px;top:245.50px;" width="18" height="18" viewBox="-9 -9 18 18"><g fill="none" stroke="#c8cad2" stroke-width="1.5"><path d="M-3.5 -5A6.3 6.3 0 0 1 4.5 -4.6M5.8 -2A6.3 6.3 0 0 1 3 5.5M0.3 6.4A6.3 6.3 0 0 1 -6.3 0.3M-6 -2.2L-5.3 -3.5"/><path d="M-1.8 -2.8A3.2 3.2 0 0 1 3.2 0.2M1.5 3A3.2 3.2 0 0 1 -3.2 0"/></g><circle cx="0" cy="0" r="1.3" fill="#c8cad2"/></svg>
<svg class="a" style="left:13.20px;top:271.50px;" width="18" height="18" viewBox="-9 -9 18 18"><path d="M1.5 -7.2L-4.8 1H-0.5L-1.5 7.2L4.8 -1H0.5Z" fill="#c8cad2"/></svg>
<div class="a" style="left:11.50px;top:297.00px;width:20.50px;height:1.00px;background:#3c404d"></div>
<svg class="a" style="left:13.20px;top:306.50px;" width="18" height="18" viewBox="-9 -9 18 18"><g><path d="M-4 -7.2L-1 -5.5V-2L-4 -0.3L-7 -2V-5.5Z" fill="#c8cad2"/><path d="M4 -7.2L7 -5.5V-2L4 -0.3L1 -2V-5.5Z" fill="none" stroke="#c8cad2" stroke-width="1.4"/><path d="M0 0.3L3 2V5.5L0 7.2L-3 5.5V2Z" fill="#c8cad2"/></g></svg>
<svg class="a" style="left:13.20px;top:333.40px;" width="18" height="18" viewBox="-9 -9 18 18"><g fill="none" stroke="#c8cad2" stroke-width="1.4"><path d="M-2.5 5H-4A3.2 3.2 0 0 1 -4.8 -1.3A4.6 4.6 0 0 1 4.4 -1.5A3.2 3.2 0 0 1 4.2 5H2.5"/><path d="M1.6 -0.5C1 -1.3 -1.6 -1.3 -1.6 0.2C-1.6 1.8 1.7 1.2 1.7 2.9C1.7 4.3 -0.8 4.4 -1.7 3.5M0 -1.8V5.5"/></g></svg>
<svg class="a" style="left:13.20px;top:359.00px;" width="18" height="18" viewBox="-9 -9 18 18"><g stroke="#c8cad2" stroke-width="1.5"><path d="M-7 -5.3H7M-6.8 -1.8H-5.3M-3.5 -1.8H6.8M-5 1.7H-1M1 1.7H5M-1.8 5.2H1.8"/></g></svg>
<svg class="a" style="left:13.20px;top:384.80px;" width="18" height="18" viewBox="-9 -9 18 18"><g fill="none" stroke="#c8cad2" stroke-width="1.4"><rect x="-6.6" y="2.2" width="3.6" height="5.6"/><path d="M-5.1 2.2V-1.3H0.8V5.7H-3"/><path d="M-3.1 -1.3V-5.4H6.4V1.8H0.8"/></g></svg>
<svg class="a" style="left:13.20px;top:411.30px;" width="18" height="18" viewBox="-9 -9 18 18"><path d="M2.6 -3.4A3.6 3.6 0 1 0 -1 -0.4H5.5A3.3 3.3 0 1 1 2.2 2.9" fill="none" stroke="#c8cad2" stroke-width="1.5" stroke-linecap="round" transform="translate(-1.8 -1.2)"/></svg>
<svg class="a" style="left:13.20px;top:437.70px;" width="18" height="18" viewBox="-9 -9 18 18"><g fill="none" stroke="#c8cad2" stroke-width="1.4"><path d="M0 -6.8L5.8 -4.8V0.8C5.8 3.8 3 5.8 0 7C-3 5.8 -5.8 3.8 -5.8 0.8V-4.8Z"/><path d="M0 -6.8V7M0 -3.6L-4.5 -1.2M0 0L-4.8 2.4M0 3.6L-3 5.2"/></g></svg>
<svg class="a" style="left:13.20px;top:462.70px;" width="18" height="18" viewBox="-9 -9 18 18"><g fill="none" stroke="#c8cad2" stroke-width="1.4"><path d="M3.5 -2V-6.5H-6V5.5H-1"/><path d="M-6 -3.5H3.5M-3 -3.5V5.5"/><circle cx="2.3" cy="2.5" r="2.8"/><path d="M4.3 4.5L6.8 7"/></g></svg>
<svg class="a" style="left:13.20px;top:491.00px;" width="18" height="18" viewBox="-9 -9 18 18"><g fill="none" stroke="#c8cad2" stroke-width="1.5"><path d="M2.5 -5.8A6 6 0 1 0 6 0.5"/></g><path d="M0 -1.8L0.6 -0.6L1.8 0L0.6 0.6L0 1.8L-0.6 0.6L-1.8 0L-0.6 -0.6Z" fill="#c8cad2"/><path d="M4.6 -6.2L5.2 -4.6L6.8 -4L5.2 -3.4L4.6 -1.8L4 -3.4L2.4 -4L4 -4.6Z" fill="#c8cad2"/></svg>
<div class="a" style="left:11.50px;top:516.50px;width:20.50px;height:1.00px;background:#3c404d"></div>
<svg class="a" style="left:13.50px;top:525.00px;" width="18" height="18" viewBox="-9 -9 18 18"><g fill="none" stroke="#c8cad2" stroke-width="1.4"><path d="M-3.5 -2.2C-3.5 -5 3.5 -5 3.5 -2.2V3C3.5 5.5 -3.5 5.5 -3.5 3Z"/><path d="M-2 -4.8L-3.2 -6.8M2 -4.8L3.2 -6.8M-3.5 -1H-7M3.5 -1H7M-3.5 2L-6.5 4M3.5 2L6.5 4M-3.3 -3.5L-6 -5M3.3 -3.5L6 -5M0 -1V5.5M-3.5 -1.5L0 0.5L3.5 -1.5"/></g></svg>
<svg class="a" style="left:13.50px;top:552.00px;" width="18" height="18" viewBox="-9 -9 18 18"><g fill="none" stroke="#c8cad2" stroke-width="1.5"><path d="M-5.8 4.5A6.8 6.8 0 0 1 2 -6.5" stroke-dasharray="1.6 1.6"/><path d="M4.3 -4.8A6.8 6.8 0 0 1 5.8 4.5"/></g><path d="M2.8 -4.5L-0.5 2.4A1.5 1.5 0 0 0 1.9 3Z" fill="#c8cad2"/></svg>
<svg class="a" style="left:13.50px;top:578.00px;" width="18" height="18" viewBox="-9 -9 18 18"><g fill="none" stroke="#c8cad2" stroke-width="1.5"><path d="M-6.5 -6H-4.8M-3.2 -6H-1.5M0 -6H1.8M-6.5 -2.5H-4.8M-6.5 1H-4.8M-6.5 4.5H-4.8"/><circle cx="1.8" cy="1.8" r="3.8"/><path d="M-0.9 4.5L-4 7.3"/></g><circle cx="1.8" cy="1.8" r="1" fill="#c8cad2"/></svg>
<svg class="a" style="left:13.40px;top:686.00px;" width="18" height="18" viewBox="-9 -9 18 18"><path d="M-1.3 -6.5H1.3V-4H4V-1.3H6.8V1.3H4V5.5H1.3V3.3H-1.3V5.5H-6.8V-4H-1.3Z" fill="#dcdce0"/></svg>
<svg class="a" style="left:0.00px;top:0.00px;" width="46" height="46" viewBox="0 0 46 46"><circle cx="22.1" cy="724.7" r="9" fill="#9a1230"/><g fill="#86e8b0"><rect x="15.9" y="716.9" width="12.8" height="2.1"/><rect x="17.9" y="718.9" width="2.6" height="6.3"/><rect x="23.8" y="718.9" width="2.6" height="6.3"/><rect x="14.3" y="725" width="15.7" height="3.5"/><rect x="20" y="728" width="4.5" height="1.4"/><rect x="14.3" y="728.4" width="3.9" height="3.9"/><rect x="26" y="728.4" width="4" height="3.9"/></g></svg>
<div class="a" style="left:0.00px;top:746.60px;width:46.00px;height:1.00px;background:#4a4e5a"></div>
<div class="a" style="left:7.80px;top:738.40px;width:30.70px;height:11.60px;background:#f6a623;border-radius:3px"></div>
<div class="a" style="left:19.5px;top:749.5px;width:0;height:0;border-left:3px solid transparent;border-right:3px solid transparent;border-top:3px solid #f6a623"></div>
<div class="t" style="left:12.00px;top:739.90px;font-size:9.80px;font-weight:bold;color:#272b35;letter-spacing:-0.182px;">NEW</div>
<div class="t" style="left:17.60px;top:753.96px;font-size:16.00px;font-weight:normal;color:#e8972a;-webkit-text-stroke:0.5px #e8972a;">?</div>
<div class="t" style="left:12.10px;top:776.73px;font-size:12.60px;font-weight:bold;color:#e8972a;letter-spacing:-1.735px;">Help</div>
</body></html>
